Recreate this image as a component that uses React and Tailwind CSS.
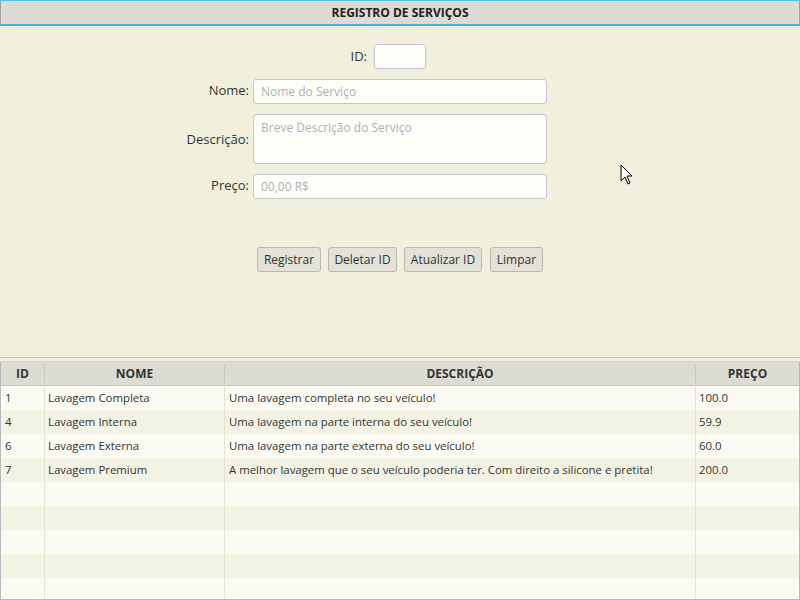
const rows = [
  { id: '1', nome: 'Lavagem Completa', desc: 'Uma lavagem completa no seu veículo!', preco: '100.0' },
  { id: '4', nome: 'Lavagem Interna', desc: 'Uma lavagem na parte interna do seu veículo!', preco: '59.9' },
  { id: '6', nome: 'Lavagem Externa', desc: 'Uma lavagem na parte externa do seu veículo!', preco: '60.0' },
  { id: '7', nome: 'Lavagem Premium', desc: 'A melhor lavagem que o seu veículo poderia ter. Com direito a silicone e pretita!', preco: '200.0' },
  null, null, null, null, null,
]

const font = { fontFamily: '"Open Sans", "Noto Sans", sans-serif' }

const Field = ({ label, placeholder, tall }) => (
  <div className="flex items-start">
    <div className={`w-[253px] pr-[4px] text-right text-[13px] text-[#333] ${tall ? 'pt-[16px]' : 'pt-[2px]'}`}>{label}</div>
    <div
      className={`w-[294px] rounded-[3px] border border-[#c4c4d4] bg-[#fefef8] px-[7px] text-[12px] text-[#b0b0b8] ${
        tall ? 'h-[50px] pt-[4px]' : 'h-[25px] leading-[23px]'
      }`}
    >
      {placeholder}
    </div>
  </div>
)

const Btn = ({ children, w }) => (
  <button className={`h-[25px] ${w} rounded-[3px] border border-[#b8b8b0] bg-[#e2e2d8] text-[12px] leading-[23px] text-[#333]`}>
    {children}
  </button>
)

export default function App() {
  return (
    <div className="relative flex h-[600px] w-[800px] flex-col overflow-hidden bg-[#f0f0dc]" style={font}>
      {/* top panel */}
      <div className="flex h-[26px] shrink-0 items-center justify-center border-x border-t border-b-2 border-x-[#a0a0a0] border-t-[#4ec3e6] border-b-[#3fb9e2] bg-[#dcdcd4] text-[12px] font-bold text-[#222]">
        REGISTRO DE SERVIÇOS
      </div>
      <div className="flex h-[330px] shrink-0 flex-col">
        <div className="mt-[18px] flex items-center">
          <div className="w-[367px] text-right text-[13px] text-[#333]">ID:</div>
          <div className="ml-[7px] h-[25px] w-[52px] rounded-[3px] border border-[#c4c4d4] bg-[#fefef8]" />
        </div>
        <div className="mt-[10px] flex flex-col gap-[10px]">
          <Field label="Nome:" placeholder="Nome do Serviço" />
          <Field label="Descrição:" placeholder="Breve Descrição do Serviço" tall />
          <Field label="Preço:" placeholder="00,00 R$" />
        </div>
        <div className="ml-[257px] mt-[48px] flex items-start gap-[7px]">
          <Btn w="w-[64px]">Registrar</Btn>
          <Btn w="w-[69px]">Deletar ID</Btn>
          <Btn w="w-[78px] mr-[1px]">Atualizar ID</Btn>
          <Btn w="w-[53px]">Limpar</Btn>
        </div>
      </div>

      {/* divider */}
      <div className="h-[2px] shrink-0 border-b border-[#c8c8d0]" />
      <div className="h-[4px] shrink-0 border-b border-[#d0d0d8]" />

      {/* table */}
      <div className="flex min-h-0 flex-1 flex-col overflow-hidden border-x border-b border-[#b8b8c0]">
        <div className="flex h-[24px] shrink-0 items-center border-b border-[#c8c8c0] bg-[#dcdcd2] text-[12px] font-bold text-[#333]">
          <div className="w-[44px] border-r border-[#c8c8c8] text-center">ID</div>
          <div className="w-[180px] border-r border-[#c8c8c8] text-center">NOME</div>
          <div className="w-[471px] border-r border-[#c8c8c8] text-center">DESCRIÇÃO</div>
          <div className="flex-1 text-center">PREÇO</div>
        </div>
        {rows.map((r, i) => (
          <div
            key={i}
            className={`flex h-[24px] shrink-0 items-center text-[11.4px] text-[#333] ${i % 2 === 0 ? 'bg-[#fbfbf3]' : 'bg-[#f3f3e4]'}`}
          >
            <div className="h-full w-[44px] border-r border-[#e4e4cc] pl-[4px] leading-[24px]">{r?.id}</div>
            <div className="h-full w-[180px] border-r border-[#e4e4cc] pl-[3px] leading-[24px]">{r?.nome}</div>
            <div className="h-full w-[471px] border-r border-[#e4e4cc] pl-[4px] leading-[24px]">{r?.desc}</div>
            <div className="h-full flex-1 pl-[3px] leading-[24px]">{r?.preco}</div>
          </div>
        ))}
      </div>

      {/* cursor */}
      <svg className="absolute left-[620px] top-[164px]" width="14" height="22" viewBox="0 0 14 22">
        <path d="M1 1 L1 17 L5 13 L8 20 L10 19 L7 12 L12 12 Z" fill="#fff" stroke="#000" strokeWidth="1" strokeLinejoin="round" />
      </svg>
    </div>
  )
}
